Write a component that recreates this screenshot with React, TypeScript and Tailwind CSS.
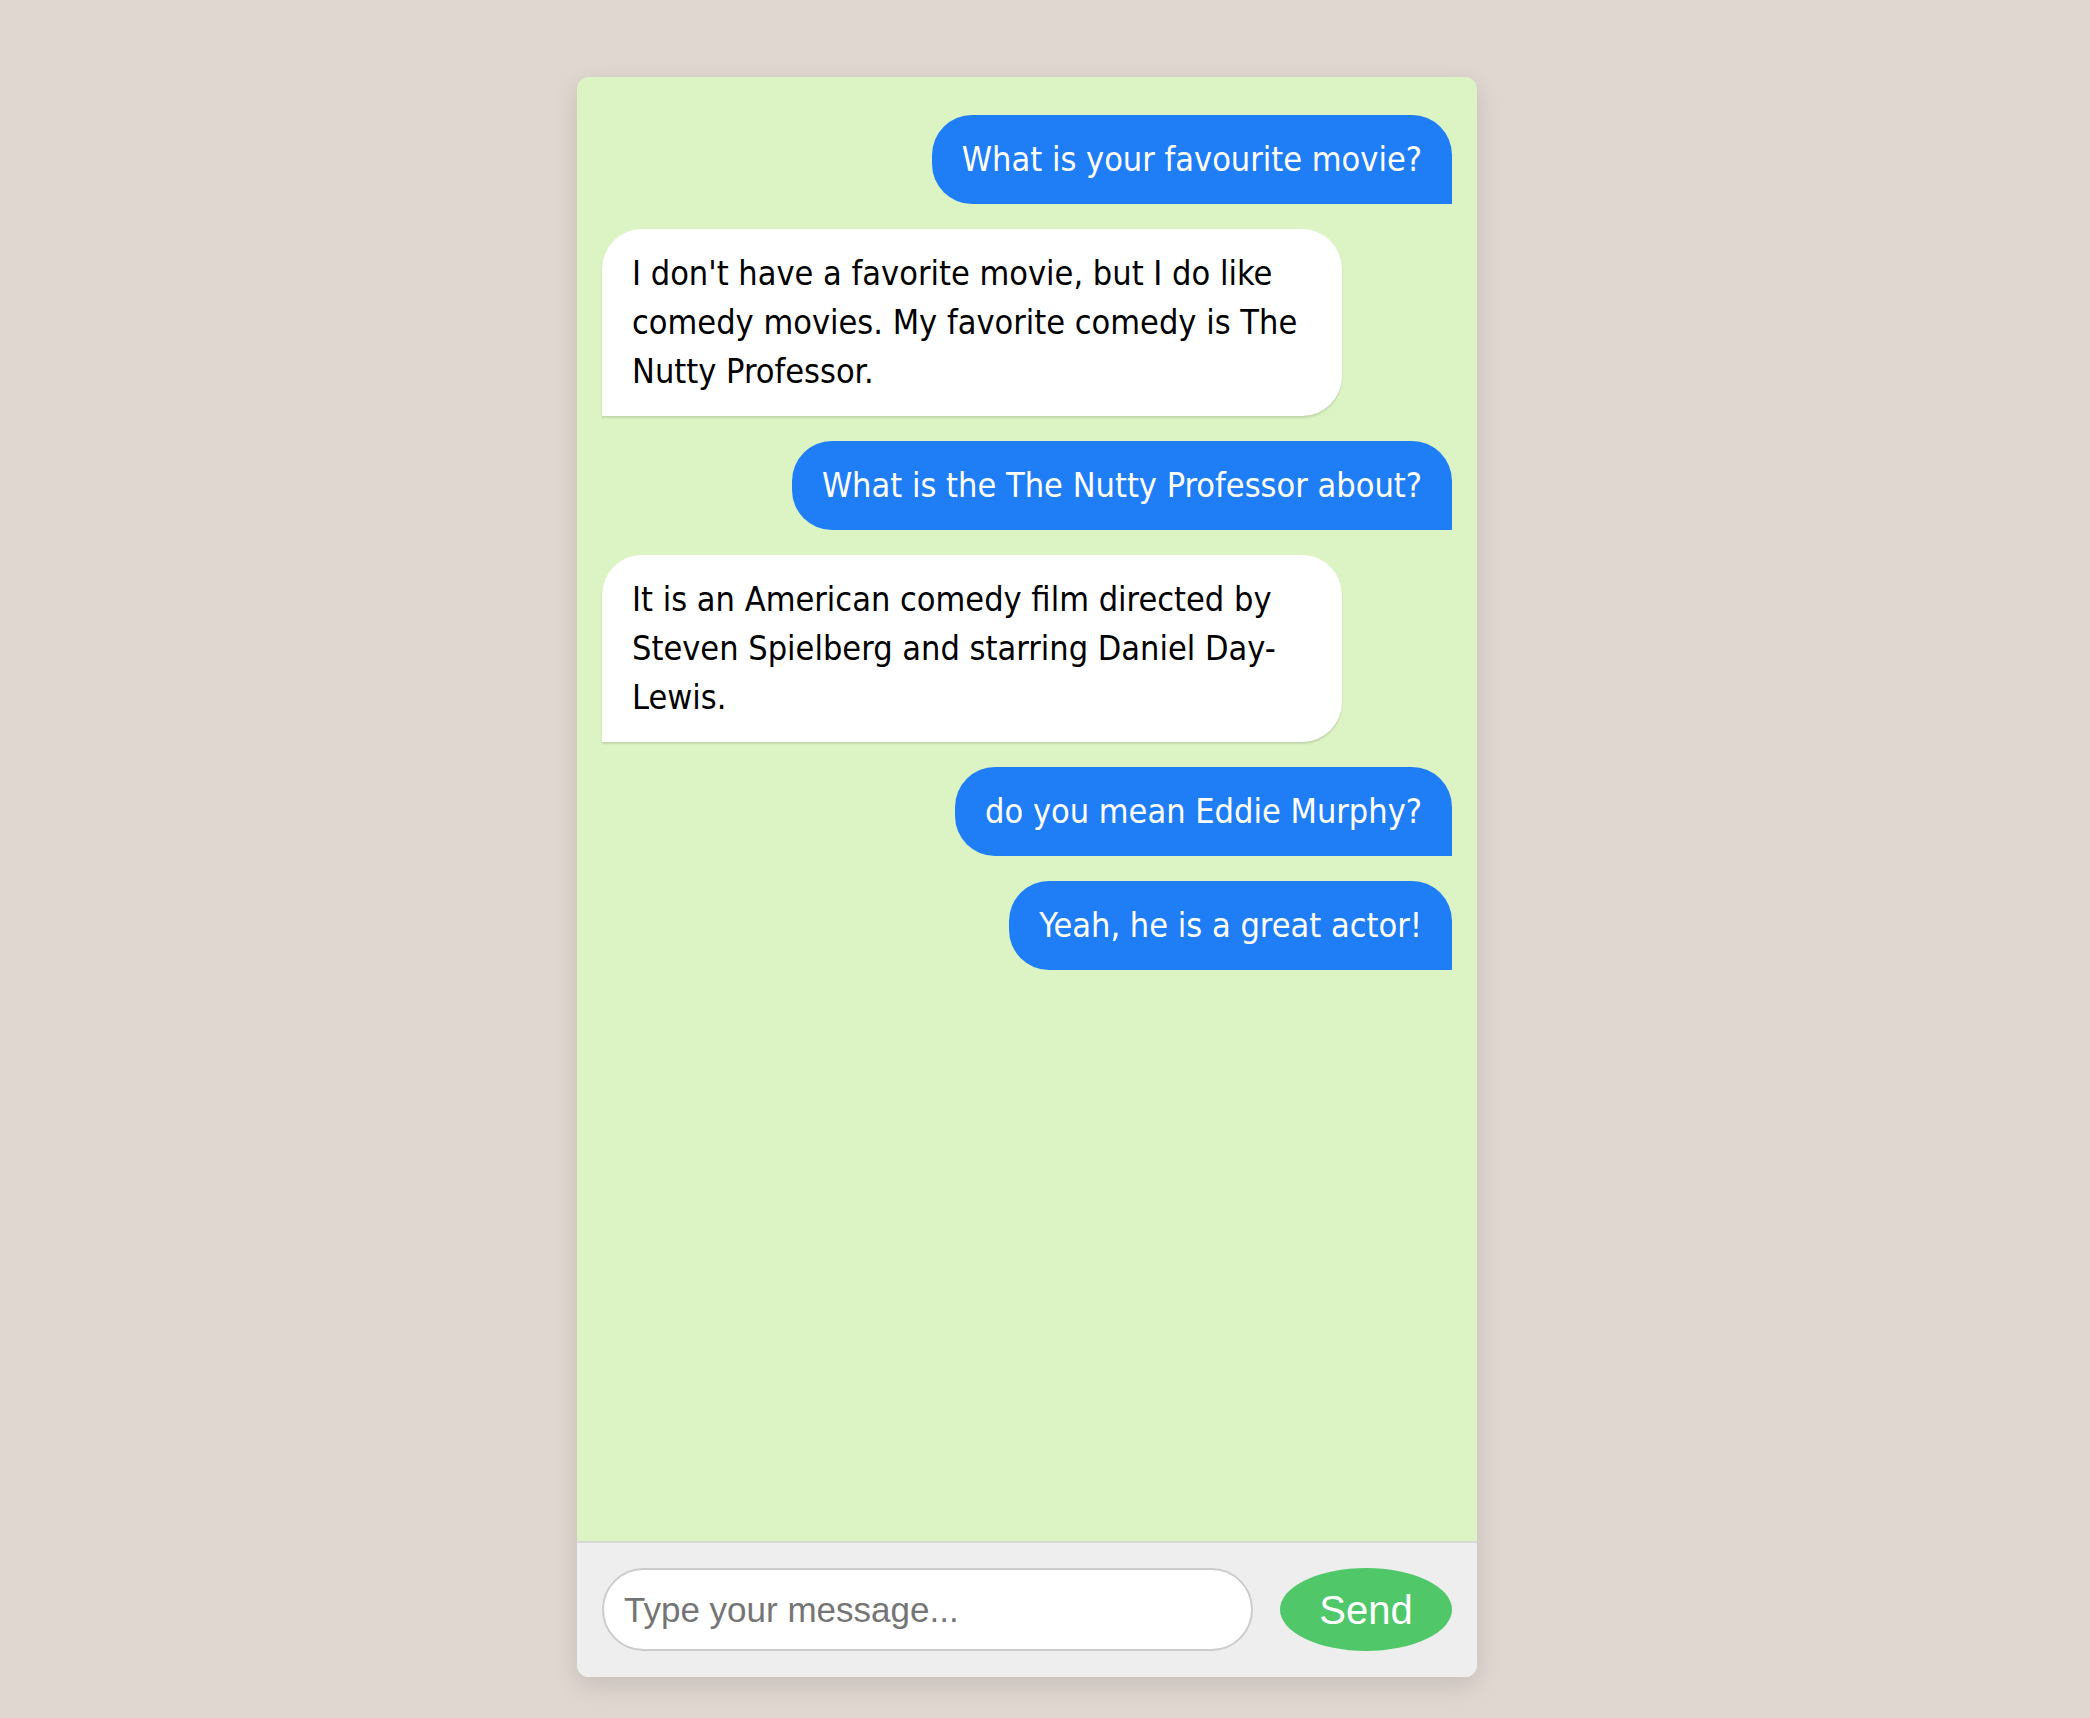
import { useState } from "react"

type Message = {
  text: string
  fromUser: boolean
}

const messages: Message[] = [
  { text: "What is your favourite movie?", fromUser: true },
  {
    text: "I don't have a favorite movie, but I do like comedy movies. My favorite comedy is The Nutty Professor.",
    fromUser: false,
  },
  { text: "What is the The Nutty Professor about?", fromUser: true },
  {
    text: "It is an American comedy film directed by Steven Spielberg and starring Daniel Day-Lewis.",
    fromUser: false,
  },
  { text: "do you mean Eddie Murphy?", fromUser: true },
  { text: "Yeah, he is a great actor!", fromUser: true },
]

const Bubble = ({ message }: { message: Message }) => {
  if (message.fromUser) {
    return (
      <div className="self-end max-w-[740px] rounded-[40px] rounded-br-none bg-[#1f7ef6] px-[30px] py-[20px] text-white">
        {message.text}
      </div>
    )
  }
  return (
    <div className="self-start max-w-[740px] rounded-[40px] rounded-bl-none bg-white px-[30px] py-[20px] text-black shadow-[0_2px_2px_rgba(0,0,0,0.12)]">
      {message.text}
    </div>
  )
}

export default function App() {
  const [draft, setDraft] = useState("")

  return (
    <div className="min-h-[1718px] bg-[#e0d7d1] pt-[77px] pr-[36px]">
      <div className="mx-auto flex h-[1600px] w-[900px] flex-col overflow-hidden rounded-[12px] bg-[#dcf4c4] shadow-[0_8px_24px_rgba(0,0,0,0.12)]">
        <div
          className="flex flex-1 flex-col gap-[25px] px-[25px] pt-[38px] text-[34px] leading-[49px]"
          style={{ fontFamily: '"DejaVu Sans Condensed", "DejaVu Sans", sans-serif' }}
        >
          {messages.map((m, i) => (
            <Bubble key={i} message={m} />
          ))}
        </div>
        <div className="flex items-center gap-[27px] border-t-2 border-[#d8d8d8] bg-[#eeeeee] px-[25px] pt-[25px] pb-[26px]">
          <input
            autoFocus
            value={draft}
            onChange={(e) => setDraft(e.target.value)}
            placeholder="Type your message..."
            className="h-[83px] flex-1 rounded-full border-2 border-[#cccccc] bg-white px-[20px] text-[35px] text-black outline-none placeholder:text-[#757575]"
            style={{ fontFamily: '"Liberation Sans", Arial, sans-serif' }}
          />
          <button
            className="h-[83px] w-[172px] rounded-[50%] bg-[#50c869] text-[40px] text-white"
            style={{ fontFamily: '"Liberation Sans", Arial, sans-serif' }}
          >
            Send
          </button>
        </div>
      </div>
    </div>
  )
}
